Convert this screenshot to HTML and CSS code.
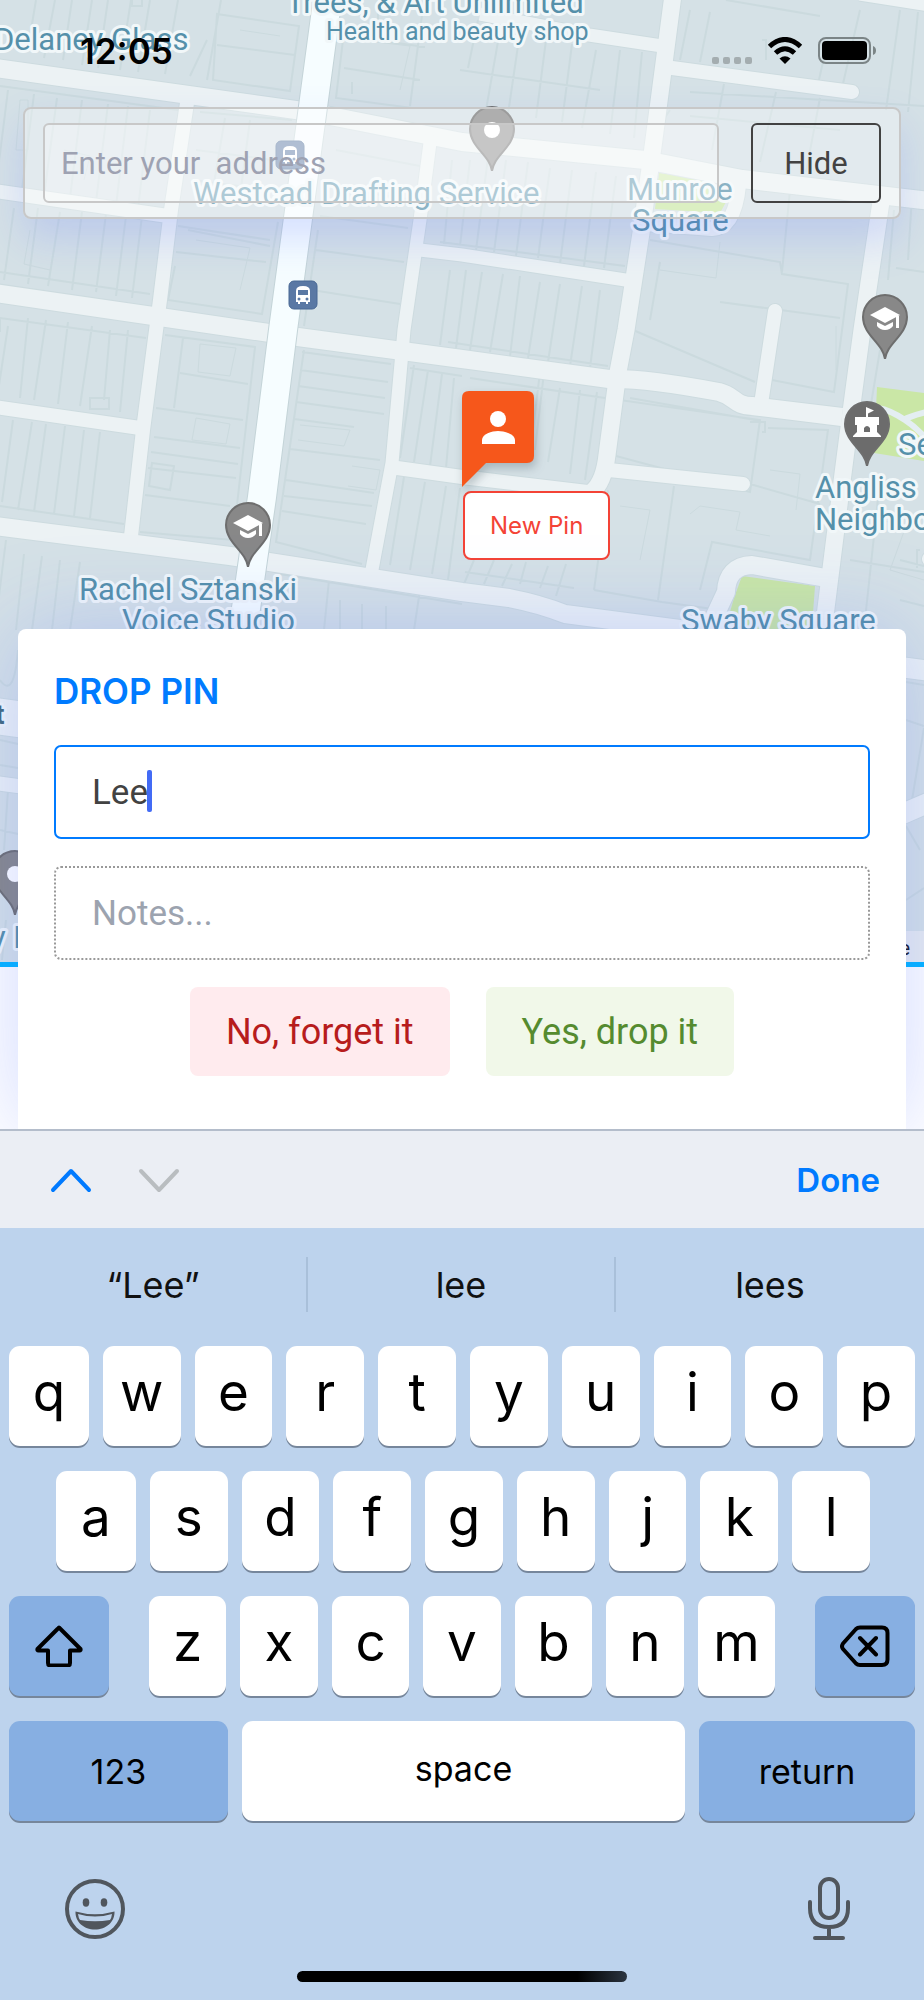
FILE: index.html
```html
<!DOCTYPE html>
<html lang="en">
<head>
<meta charset="utf-8">
<meta name="viewport" content="width=device-width, initial-scale=1">
<title>Drop Pin</title>
<link rel="stylesheet" href="styles.css">
</head>
<body>
<main class="screen">
  <div class="map">
    <svg class="map-art" viewBox="0 0 924 964" preserveAspectRatio="xMidYMin slice" role="img" aria-label="Street map">
      <defs>
        <g id="roads" fill="none" stroke-linejoin="round">
          <path class="w18" d="M-5 68L310 112 462 142 645 160 742 179 930 201"/>
          <path class="w14" d="M-5 191L168 216"/>
          <path class="w18" d="M-5 293L153 316 283 335 462 359 609 379Q645 378 719 392C735 396 735 406 752 406L842 417"/>
          <path class="w14" d="M-5 407L140 428"/>
          <path class="w18" d="M-5 526L230 556 462 592 509 598Q540 604 565 614L695 631 830 650"/>
          <path class="w14" d="M187 103L171 210 160 300 143 430 130 545"/>
          <path class="w13" d="M431 135L420 220 404 330 392 463 371 575"/>
          <path class="w13" d="M420 250L462 255 632 281"/>
          <path class="w17" d="M673-5L653 147 641 233 626 330 618 372 607 455Q604 482 592 492"/>
          <path class="w14" d="M390 467L462 477 596 493"/>
          <path class="w14 round" d="M609 470L743 484"/>
          <path class="w14 round" d="M672 68L852 92"/>
          <path class="w13" d="M480 14L589 35 662 46"/>
          <path class="w14 round" d="M775 311L761 404"/>
          <path class="w17" d="M882 195L862 330 851 412 840 497 822 640"/>
          <path class="w18" d="M826 578L752 565Q727 566 726 592L712 622"/>
          <path class="w14" d="M739 185Q735 228 712 229L645 224"/>
          <path class="w17" d="M860-8L930 3"/>
          <path class="w14 round" d="M929 559L940 560"/>
          <path class="w36" d="M-5 716L25 720"/>
          <path class="w14" d="M-5 783L25 787"/>
          <path class="w20" d="M900 667L930 671M900 815L930 802"/>
        </g>
        <path id="artery" d="M328-5L283 330 262 497 240 650" fill="none"/>
        <path id="pin" d="M0 42C-2 26-22 18-22 0A22 22 0 1 1 22 0C22 18 2 26 0 42Z"/>
        <g id="cap" fill="#fff">
          <path d="M-15-2L0-10 15-2 0 6Z"/>
          <path d="M-8 5L0 9 8 5V9Q5 13 0 13T-8 9Z"/>
          <path d="M11-1H14V11H11Z"/>
        </g>
        <g id="bus">
          <rect x="-14" y="-14" width="28" height="28" rx="5" fill="#5a78a4" stroke="#496894"/>
          <path fill="#fff" d="M-7 7V-4Q-7-9 0-9T7-4V7H5V9H3V7H-3V9H-5V7Z"/>
          <path fill="#5a78a4" d="M-5-5H5V0H-5Z"/>
          <circle cx="-4" cy="4" r="1.5" fill="#5a78a4"/><circle cx="4" cy="4" r="1.5" fill="#5a78a4"/>
        </g>
      </defs>
      <rect width="924" height="964" fill="#d5e1e6"/>
      <path class="lots" d="M36 0L28 48M55 0L44 58M72 0L63 60M92 0L82 65M108 0L98 68M131 0L120 70M150 0L138 72M178 0L165 74M207 40L190 76M221 0L207 80M217 14L299 26 290 91 213 80ZM217 45L295 55M343 40L336 98 412 108M344 68L420 80M424 0L410 106M132-2V6H142V-2M378 4V40M390 42L425 47M352 82V94
        M8 90L-4 186M34 94L22 190M57 98L44 196M82 100L70 198M108 104L96 202M128 106L116 206M150 110L138 208M0 86L178 110M200 112L292 120M196 150L288 162M192 180L284 192M225 118L212 195M250 120L240 196
        M14 208L4 280M38 208L28 284M60 212L48 286M82 212L72 290M106 214L96 292M126 216L116 296M142 216L132 298M165 221L155 297M0 272L150 294M178 226L270 240M176 252L266 262M175 266L168 300 262 314 278 222M188 230L270 246
        M320 216L408 228M316 250L404 262M312 290L400 304M318 230L304 326M340 118L424 138M336 150L420 166M332 188L416 200
        M8 326L-2 392M28 318L20 398M46 320L34 400M68 322L58 404M92 326L80 406M110 330L104 400M128 330L120 412M90 398H109V409H90Z
        M13 420L2 502M32 422L18 510M46 424L34 512M65 426L54 514M84 430L74 516M100 432L90 518M0 506L124 524M0 332V318L146 338
        M165 335L255 347 233 540 140 532M183 338L174 408M180 373L248 384M156 408L243 420M154 437L240 448M151 452L238 464M148 468L236 478M145 495L230 506M152 463L174 466 170 490 149 486Z
        M302 352L391 364M300 370L388 382M298 386L385 398M296 402L384 414M294 419L354 427M290 449L380 460M286 480L374 493M284 496L372 506M282 511L366 524M304 350L276 542 362 564
        M414 365L400 458M428 370L414 462M442 374L430 466M454 378L446 468M410 368L462 376M404 477L390 565M425 482L410 570M446 486L432 574M460 488L448 580
        M6 540L-4 620M24 554L16 630M42 556L32 630M60 560L52 630M80 562L70 630M330 570L324 630M340 600V630M362 604V630M386 606V630M420 590L414 630M280 574L462 604
        M452 160L444 244M470 160L460 246M488 158L476 250M506 160L494 252M528 162L516 256M550 168L538 258M572 170L560 264M596 172L584 266M616 176L604 268M440 242L625 266
        M450 270L440 345M466 270L456 348M482 272L470 350M503 274L490 352M520 276L510 356M540 282L528 358M560 284L548 362M582 286L570 366M600 290L590 368M448 342L608 366
        M545 364L535 450M560 388L548 462M580 390L570 474M597 392L585 480M470 378L605 398M540 372L530 454
        M474 560L464 584M494 560L484 584M512 564L502 586M526 562L520 584M548 566L540 588M566 564L556 596M574 588L465 572
        M610 408L620 400 760 420 750 492 616 456ZM630 398L755 420M674 486L658 600M594 590L662 602 720 610M750 422L765 422V432H762M768 428L828 430 810 560 712 542 700 590M608 490L594 590M750 484L820 504
        M690 10L680 60M710 12L700 62M726 0L820 16M828 40L818 84M860 10L842 88M900 10L886 110M918 12L908 112M762 40H766V60M690 92L924 106M724 84L712 150M776 92L760 162M820 98L806 172M670 110L655 132M690 116L840 130
        M650 240L780 262 782 274 848 284 834 392 772 380M790 190L782 272M660 262L650 320M633 330L755 382M720 302L840 318M894 210L888 280M896 268L924 272M912 196L908 260M880 350L870 410M880 480L865 620M900 560L924 566M850 560L924 572M920 550H917V568M900 600L924 606
        M478 20L468 68M500 30L486 110M520 32L508 114M546 40L536 118M572 44L562 122M596 50L582 128M620 50L610 134M642 52L634 138M460 70L600 90
        M0 680Q14 700 18 650M0 740L18 744M0 765L18 768M8 790L4 850M0 830L18 834M6 920L2 960M906 682L924 685M906 720L924 726M924 728L912 800M906 900L924 888M906 826L920 850"/>
      <path class="lots faint" d="M20 100H28V150H16ZM64 150L90 156 84 180M30 230L24 264 50 270M240 30L280 36M360 40L410 46 400 90M196 240L250 248 240 290M200 344L236 348 230 376 198 372ZM196 418L230 424 226 444 192 440ZM300 425L350 430 344 446 298 440M352 466L380 470 376 490 348 486M690 514L700 506 740 512 736 530 770 536M620 506L650 510 640 560M770 470L800 474 796 510M720 242L716 278 660 270M880 520L906 526 890 570 924 580M836 326L836 370"/>
      <path fill="#cae7a6" d="M877 387L924 393V461L874 453ZM742 576L815 586 811 640H722L734 598ZM659 173L705 179 726 202 720 213 655 209Z"/>
      <path d="M878 408Q890 410 905 420T930 444M903 420Q910 416 930 411" fill="none" stroke="#e4eef2" stroke-width="6"/>
      <use href="#roads" class="casing"/>
      <use href="#roads" class="road"/>
      <use href="#artery" stroke="#c4d4d8" stroke-width="30"/>
      <use href="#artery" stroke="#f6fdff" stroke-width="28"/>
      <use href="#bus" x="290" y="155"/>
      <use href="#bus" x="303" y="295"/>
      <g class="grey-pins">
        <use href="#pin" x="492" y="129"/>
        <use href="#pin" x="248" y="525"/>
        <use href="#pin" x="885" y="317"/>
        <use href="#pin" x="15" y="873"/>
        <use href="#pin" x="867" y="424" fill="#6c6c6c"/>
      </g>
      <circle cx="492" cy="130" r="8" fill="#fff"/><circle cx="15" cy="874" r="8" fill="#fff"/>
      <use href="#cap" x="248" y="525"/><use href="#cap" x="885" y="317"/>
      <path fill="#fff" fill-rule="evenodd" d="M866 407L874 410.500 868 413.500V417H879V425H877V432L881 436V437H853V436L857 432V425H855V417H866ZM864 432H870V428Q867 424 864 428Z"/>
      <g class="place">
        <text x="-6" y="50">Delaney Glass</text>
        <text x="286" y="13">Trees, &amp; Art Unlimited</text>
        <text class="kind" x="326" y="40">Health and beauty shop</text>
        <text x="193" y="204">Westcad Drafting Service</text>
        <text x="627" y="200">Munroe</text>
        <text x="632" y="231">Square</text>
        <text x="79" y="600">Rachel Sztanski</text>
        <text x="122" y="631">Voice Studio</text>
        <text x="681" y="631">Swaby Square</text>
        <text x="898" y="455">Se</text>
        <text x="815" y="498">Angliss</text>
        <text x="815" y="530">Neighbo</text>
        <text x="-9" y="948">y N</text>
        <text class="street" x="-5" y="724">t</text>
      </g>
      <path d="M800 931H924V964H800Z" fill="#f3f1f4" opacity=".65"/>
      <text class="legal" x="910" y="955" text-anchor="end">Google</text>
    </svg>
    <div class="marker">
      <svg class="marker-flag" viewBox="0 0 74 98" aria-hidden="true">
        <path fill="#f6571b" d="M7 0H65Q72 0 72 7V65Q72 72 65 72H24L0 96V7Q0 0 7 0Z"/>
        <circle cx="36" cy="28" r="8" fill="#fff"/>
        <path fill="#fff" d="M20 53V49C20 43 30 40 36 40S53 43 53 49V53Z"/>
      </svg>
      <button class="marker-label" type="button">New Pin</button>
    </div>
  </div>

  <header class="status">
    <time>12:05</time>
    <svg class="status-icons" viewBox="0 0 166 30" aria-label="Wi-Fi and battery">
      <g fill="#a4adb0"><rect y="20" width="7" height="7" rx="2"/><rect x="11" y="20" width="7" height="7" rx="2"/><rect x="22" y="20" width="7" height="7" rx="2"/><rect x="33" y="20" width="7" height="7" rx="2"/></g>
      <g fill="none" stroke="#000" stroke-width="5"><path d="M57.500 9.500Q73 -4.500 88.500 9.500"/><path d="M63.500 16Q73 7.500 82.500 16"/></g>
      <path d="M73 27L67.500 21.500Q73 17 78.500 21.500Z"/>
      <rect x="107" y="1" width="51" height="25" rx="7" fill="none" stroke="#7b8486" stroke-width="2"/>
      <rect x="110" y="4" width="45" height="19" rx="4"/>
      <path d="M161 9Q164 10 164 13.500T161 18Z" fill="#7b8486"/>
    </svg>
  </header>

  <form class="search">
    <input class="search-input" type="text" aria-label="Address" placeholder="Enter your  address">
    <button class="search-hide" type="button">Hide</button>
  </form>

  <form class="sheet">
    <h1>DROP PIN</h1>
    <div class="field-wrap">
      <input class="field field-active" type="text" aria-label="Pin name" value="Lee">
      <span class="caret"></span>
    </div>
    <input class="field" type="text" aria-label="Notes" placeholder="Notes...">
    <div class="actions">
      <button class="action no" type="button">No, forget it</button>
      <button class="action yes" type="button">Yes, drop it</button>
    </div>
  </form>
</main>

<section class="keyboard" aria-label="Keyboard">
  <div class="toolbar">
    <button type="button" aria-label="Previous field"><svg width="42" height="28" viewBox="0 0 42 28"><path d="M3 24L21 5 39 24" stroke="#007aff"/></svg></button>
    <button type="button" aria-label="Next field"><svg width="42" height="28" viewBox="0 0 42 28"><path d="M3 5L21 24 39 5" stroke="#b9bdc0"/></svg></button>
    <button class="done" type="button">Done</button>
  </div>
  <div class="suggestions">
    <button type="button">“Lee”</button>
    <button type="button">lee</button>
    <button type="button">lees</button>
  </div>
  <div class="keys">
    <div class="row row-10">
      <button type="button">q</button><button type="button">w</button><button type="button">e</button><button type="button">r</button><button type="button">t</button><button type="button">y</button><button type="button">u</button><button type="button">i</button><button type="button">o</button><button type="button">p</button>
    </div>
    <div class="row row-9">
      <button type="button">a</button><button type="button">s</button><button type="button">d</button><button type="button">f</button><button type="button">g</button><button type="button">h</button><button type="button">j</button><button type="button">k</button><button type="button">l</button>
    </div>
    <div class="row row-shift">
      <button class="mod" type="button" aria-label="Shift"><svg width="48" height="42" viewBox="0 0 48 42"><path d="M24 2.500L45.500 24Q46 25.500 44.500 25.500H35V38Q35 40.500 32.500 40.500H15.500Q13 40.500 13 38V25.500H3.500Q2 25.500 2.500 24L22.500 4Q24 2.500 25.500 4"/></svg></button>
      <div class="row row-7">
        <button type="button">z</button><button type="button">x</button><button type="button">c</button><button type="button">v</button><button type="button">b</button><button type="button">n</button><button type="button">m</button>
      </div>
      <button class="mod" type="button" aria-label="Delete"><svg width="50" height="42" viewBox="0 0 50 42"><path d="M20 2.500H42Q47.500 2.500 47.500 8V34.500Q47.500 40 42 40H20Q17.500 40 16 38.500L3 24Q1 21.500 3 18.500L16 4Q17.500 2.500 20 2.500ZM20 13L36 29.500M36 13L20 29.500"/></svg></button>
    </div>
    <div class="row row-space">
      <button class="mod word" type="button">123</button>
      <button class="word space" type="button">space</button>
      <button class="mod word" type="button">return</button>
    </div>
  </div>
  <div class="extras">
    <button type="button" aria-label="Emoji">
      <svg width="60" height="60" viewBox="0 0 60 60">
        <circle cx="30" cy="30" r="28" fill="none" stroke="#50565d" stroke-width="4"/>
        <ellipse cx="21" cy="23.500" rx="3.300" ry="4.200" fill="#50565d"/><ellipse cx="39" cy="23.500" rx="3.300" ry="4.200" fill="#50565d"/>
        <path d="M10.500 32.500Q30 38 49.500 32.500C50 43 41 50.500 30 50.500S10 43 10.500 32.500Z" fill="#50565d"/>
        <path d="M13 35Q30 40 47 35Q46.500 39 45 41Q30 43.500 15 41Q13.500 39 13 35Z" fill="#bdd3ed"/>
      </svg>
    </button>
    <button type="button" aria-label="Dictate">
      <svg width="44" height="64" viewBox="0 0 44 64" fill="none" stroke="#50565d" stroke-width="4" stroke-linecap="round">
        <rect x="13" y="2" width="18" height="39" rx="9"/>
        <path d="M3 25V31Q3 50 22 50T41 31V25M22 50V61M8 61H36"/>
      </svg>
    </button>
  </div>
  <div class="home"></div>
</section>
</body>
</html>
```

FILE: styles.css
```css
* { box-sizing: border-box; }

body {
  margin: 0;
  background: #bdd3ed;
  font-family: Roboto, "Liberation Sans", sans-serif;
}

button, input { font: inherit; margin: 0; }

button {
  border: 0;
  padding: 0;
  background: none;
  color: inherit;
}

input { outline: 0; }

/* Map screen */
.screen {
  position: relative;
  overflow: hidden;
  background: #fff;
}

.map {
  position: absolute;
  top: 0;
  left: 0;
  right: 0;
  height: 967px;
  border-bottom: 5px solid #00b4ff;
  overflow: hidden;
  background: #d5e1e6;
}

.map-art { display: block; width: 100%; height: 964px; }

.lots { fill: none; stroke: #cbdade; stroke-width: 2; }
.faint { stroke-width: 1; }

.road { stroke: #ecf2f4; --extra: 0px; }
.casing { stroke: #cddbdf; --extra: 2px; }
.w13 { stroke-width: calc(13px + var(--extra)); }
.w14 { stroke-width: calc(14px + var(--extra)); }
.w17 { stroke-width: calc(17px + var(--extra)); }
.w18 { stroke-width: calc(18px + var(--extra)); }
.w20 { stroke-width: calc(20px + var(--extra)); }
.w36 { stroke-width: calc(36px + var(--extra)); }
.round { stroke-linecap: round; }

.grey-pins { fill: #888; stroke: #6e6e6e; stroke-width: 2; }

.place {
  font-size: 31px;
  fill: #5590aa;
  stroke: #f1f7f9;
  stroke-width: 6px;
  stroke-linejoin: round;
  paint-order: stroke;
}
.place .kind { font-size: 25px; }
.place .street { font-size: 28px; font-weight: 700; fill: #42697c; }
.legal { font-size: 20px; fill: #15151f; }

.marker {
  position: absolute;
  top: 391px;
  left: 50%;
  display: flex;
  flex-direction: column;
  align-items: flex-start;
}

.marker-flag {
  width: 74px;
  height: 98px;
  filter: drop-shadow(2px 5px 5px rgba(60, 80, 90, .3));
}

.marker-label {
  margin: 2px 0 0 1px;
  height: 69px;
  padding: 0 25px;
  border: 2px solid #f44336;
  border-radius: 8px;
  background: #fff;
  color: #f44336;
  font-family: Inter, sans-serif;
  font-size: 24px;
}

/* Status bar */
.status {
  position: relative;
  display: flex;
  justify-content: space-between;
  height: 107px;
  padding: 31px 46px 0 80px;
}
.status time {
  font-family: Inter, sans-serif;
  font-size: 35px;
  line-height: 40px;
  font-weight: 600;
}
.status-icons { width: 166px; height: 30px; margin-top: 6px; }

/* Address search */
.search {
  position: relative;
  display: flex;
  gap: 32px;
  margin: 0 23px;
  padding: 14px 18px;
  border: 2px solid #c8c8c8;
  border-radius: 8px;
  background: rgba(255, 255, 255, .32);
  box-shadow: 0 20px 40px rgba(100, 125, 255, .22);
}
.search-input {
  flex: 1;
  min-width: 0;
  height: 80px;
  padding: 0 16px;
  border: 2px solid #c8c8c8;
  border-radius: 6px;
  background: rgba(255, 255, 255, .3);
  font-size: 31px;
}
.search-input::placeholder { color: #9ea2b2; opacity: 1; }
.search-hide {
  width: 130px;
  border: 2px solid #424242;
  border-radius: 6px;
  color: #424242;
  font-size: 31px;
}

/* Drop pin sheet */
.sheet {
  position: relative;
  display: flex;
  flex-direction: column;
  gap: 27px;
  margin: 410px 18px 0;
  padding: 42px 36px 53px;
  border-radius: 8px 8px 0 0;
  background: #fff;
  box-shadow: 0 0 90px rgba(85, 115, 255, .28);
}
.sheet h1 {
  margin: 0 0 7px;
  color: #007bff;
  font-family: Inter, sans-serif;
  font-size: 35px;
  line-height: 40px;
  font-weight: 600;
}
.field-wrap { position: relative; }
.field {
  display: block;
  width: 100%;
  height: 94px;
  padding: 0 36px;
  border: 2px dotted #999;
  border-radius: 7px;
  background: #fff;
  color: #424242;
  font-size: 35px;
}
.field::placeholder { color: #9ca3af; opacity: 1; }
.field-active { border: 2px solid #007bff; }
.caret {
  position: absolute;
  top: 25px;
  left: 93px;
  width: 5px;
  height: 42px;
  border-radius: 2px;
  background: #436bf5;
}
.actions { display: flex; justify-content: center; gap: 36px; }
.action {
  height: 89px;
  padding: 0 36px;
  border-radius: 8px;
  font-size: 36px;
}
.no { background: #ffebee; color: #b71c1c; }
.yes { background: #f1f8e9; color: #558b2f; }

/* Keyboard */
.keyboard {
  background: #bdd3ed;
  padding-bottom: 20px;
  color: #000;
  font-family: Inter, sans-serif;
}
.toolbar {
  display: flex;
  align-items: center;
  gap: 46px;
  height: 99px;
  padding: 0 44px 0 50px;
  border-top: 2px solid #b4bdcb;
  background: #ebeef4;
}
.toolbar svg {
  display: block;
  fill: none;
  stroke-width: 4;
  stroke-linecap: round;
  stroke-linejoin: round;
}
.done {
  margin-left: auto;
  color: #007aff;
  font-size: 33px;
  line-height: 40px;
  font-weight: 600;
}
.suggestions {
  display: grid;
  grid-template-columns: repeat(3, 1fr);
  padding: 29px 0 34px;
}
.suggestions button {
  height: 55px;
  color: #111;
  font-size: 36px;
}
.suggestions button:not(:last-child) { border-right: 2px solid #a9c0da; }

.keys {
  display: flex;
  flex-direction: column;
  gap: 25px;
  padding: 0 9px;
}
.row { display: grid; gap: 13px; }
.row-10 { grid-template-columns: 80fr repeat(9, 78fr); gap: 14px; }
.row-9 { grid-template-columns: 80fr repeat(8, 78fr); gap: 14px; padding: 0 45px 0 47px; }
.row-7 { grid-template-columns: repeat(7, 1fr); gap: 14px; }
.row-shift { grid-template-columns: 100fr 627fr 100fr; gap: 40px; }
.row-space { grid-template-columns: 219fr 444fr 216fr; gap: 14px; }
.row button {
  height: 100px;
  padding-bottom: 8px;
  border-radius: 11px;
  background: #fff;
  box-shadow: 0 2px 0 #76869b;
  font-size: 53px;
  font-weight: 400;
}
.row .mod {
  display: grid;
  place-items: center;
  padding: 0;
  background: #87afe2;
}
.row .mod svg {
  fill: none;
  stroke: #000;
  stroke-width: 4;
  stroke-linecap: round;
  stroke-linejoin: round;
}
.row .word { font-size: 34px; }
.row .space { padding-bottom: 6px; }

.extras {
  display: flex;
  align-items: center;
  justify-content: space-between;
  padding: 56px 73px 30px 65px;
}
.extras svg { display: block; }
.home {
  width: 330px;
  height: 11px;
  margin: 0 auto;
  border-radius: 6px;
  background: linear-gradient(90deg, #000 85%, #2b3440);
}
```
